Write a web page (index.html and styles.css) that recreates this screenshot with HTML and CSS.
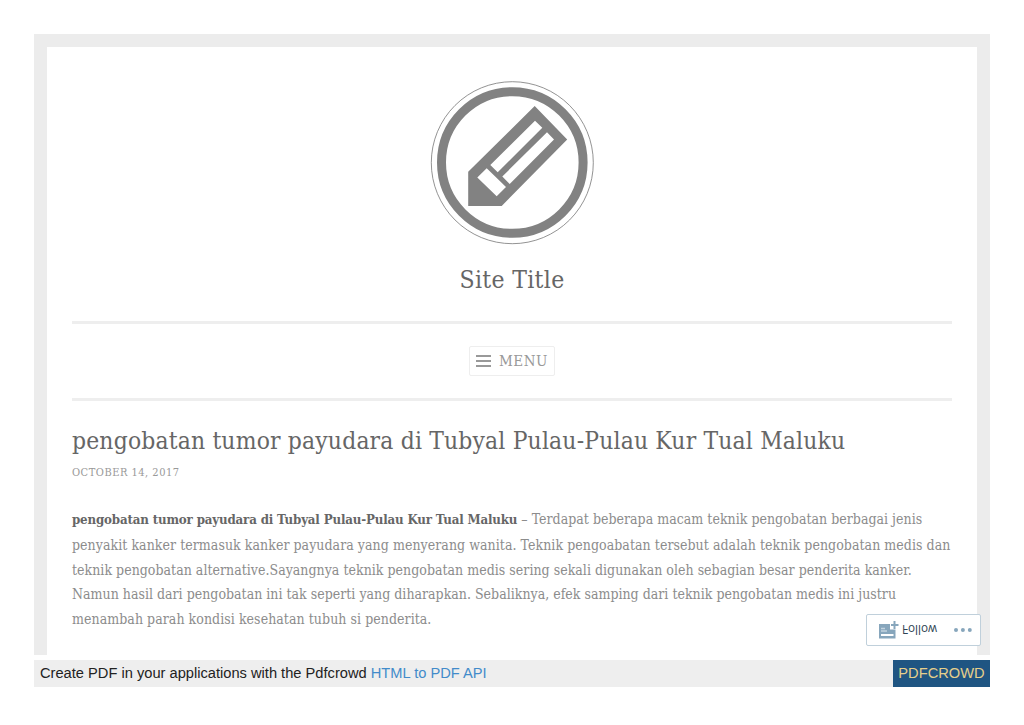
FILE: index.html
```html
<!DOCTYPE html>
<html lang="id">
<head>
<meta charset="utf-8">
<title>Site Title</title>
<link rel="stylesheet" href="styles.css">
</head>
<body>
<div class="page">
  <header class="masthead">
    <svg class="logo" viewBox="0 0 164 164" width="164" height="164" aria-hidden="true">
      <circle cx="82.300" cy="81.700" r="81" fill="none" stroke="#777" stroke-width="0.8"/>
      <circle cx="82.300" cy="81.500" r="70.800" fill="none" stroke="#828282" stroke-width="9"/>
      <path fill="#828282" fill-rule="evenodd" d="M104.700 25L137.200 58.500L71.700 125H38.200V90.800Z M105 39.700L60.300 83.900L67.700 91.300L112.300 46.700Z M117 51.300L72.300 95.500L79.700 103L124 58.500Z M56.700 87.300L47.300 96.500L66.700 115.300L76 106Z"/>
    </svg>
    <h1 class="site-title">Site Title</h1>
  </header>
  <nav class="menu-bar">
    <button class="menu-button">
      <svg width="15" height="12" viewBox="0 0 15 12" aria-hidden="true"><path d="M0 1H15M0 6H15M0 11H15" stroke="#999" stroke-width="2"/></svg>
      <span class="menu-label">MENU</span>
    </button>
  </nav>
  <article class="entry">
    <h2 class="entry-title">pengobatan tumor payudara di Tubyal Pulau-Pulau Kur Tual Maluku</h2>
    <div class="entry-date">OCTOBER 14, 2017</div>
    <p class="entry-text">
      <span class="line line-lead"><strong>pengobatan tumor payudara di Tubyal Pulau-Pulau Kur Tual Maluku</strong> – Terdapat beberapa macam teknik pengobatan berbagai jenis</span>
      <span class="line line-wide">penyakit kanker termasuk kanker payudara yang menyerang wanita. Teknik pengoabatan tersebut adalah teknik pengobatan medis dan</span>
      <span class="line line-lead">teknik pengobatan alternative.Sayangnya teknik pengobatan medis sering sekali digunakan oleh sebagian besar penderita kanker.</span>
      <span class="line line-tight">Namun hasil dari pengobatan ini tak seperti yang diharapkan. Sebaliknya, efek samping dari teknik pengobatan medis ini justru</span>
      <span class="line line-wide">menambah parah kondisi kesehatan tubuh si penderita.</span>
    </p>
  </article>
</div>
<footer class="pdf-bar">
  <span class="pdf-note">Create PDF in your applications with the Pdfcrowd <a class="pdf-link" href="#">HTML to PDF API</a></span>
  <span class="pdf-brand">PDFCROWD</span>
</footer>
<div class="follow">
  <svg class="follow-icon" width="20" height="18" viewBox="0 0 20 18" aria-hidden="true">
    <path fill="#87a6bc" fill-rule="evenodd" d="M0 3H11V8.500H16.500V17.500H0Z M2 13V15H14.500V13Z"/>
    <path d="M2 7.500H6M2 10H8" stroke="#c3d3de" stroke-width="1.500"/>
    <path d="M15.500 0V8M12 4H19.500" stroke="#87a6bc" stroke-width="2"/>
  </svg>
  <span class="follow-text">Follow</span>
  <svg class="follow-dots" width="18" height="4" viewBox="0 0 18 4" aria-hidden="true"><g fill="#87a6bc"><circle cx="2" cy="2" r="2"/><circle cx="8.900" cy="2" r="2"/><circle cx="15.800" cy="2" r="2"/></g></svg>
</div>
</body>
</html>
```
FILE: styles.css
```css
body { margin: 0; background: #fff; }
.page { box-sizing: border-box; width: 956px; height: 621px; margin: 34px 0 0 34px; padding: 0 25px; border: 13px solid #ececec; border-bottom: 0; font-family: "DejaVu Serif Condensed", "DejaVu Serif", serif; color: #666; }
.masthead { display: flex; flex-direction: column; align-items: center; height: 274px; padding-top: 34px; box-sizing: border-box; }
.logo { flex: none; }
.site-title { margin: 15px 0 0; font-size: 24.5px; font-weight: 400; line-height: 40px; letter-spacing: 0.33px; }
.menu-bar { display: flex; justify-content: center; align-items: center; height: 80px; box-sizing: border-box; border: solid #eee; border-width: 3px 0; }
.menu-button { display: flex; align-items: center; gap: 8px; width: 86px; height: 30px; font: 15px "DejaVu Serif Condensed", "DejaVu Serif", serif; letter-spacing: 0.5px; color: #999; background: #fff; border: 1px solid #eee; border-radius: 2px; padding: 0 6px; }
.entry-title { margin: 23px 0 0; font-size: 24.4px; font-weight: 400; line-height: 34px; letter-spacing: 0.17px; white-space: nowrap; }
.entry-date { font-size: 11px; line-height: 16px; margin-top: 7px; color: #999; letter-spacing: 0.5px; }
.entry-text { margin: 26.3px 0 0; font-size: 14px; line-height: 24.7px; color: #8c8c8c; }
.line { display: block; white-space: nowrap; }
.line-lead { letter-spacing: 0.025px; }
.line-wide { letter-spacing: 0.052px; }
.line-tight { letter-spacing: 0.013px; }
.entry-text strong { color: #666; font-size: 13.2px; letter-spacing: -0.17px; }
.pdf-bar { display: flex; justify-content: space-between; align-items: flex-start; width: 956px; height: 27px; margin: 5px 0 0 34px; padding-left: 6px; box-sizing: border-box; background: #eee; font: 14.67px/26px "Liberation Sans", Arial, sans-serif; color: #222; }
.pdf-link { color: #428bca; text-decoration: none; }
.pdf-brand { width: 97px; height: 27px; text-align: center; background: #1f5582; color: #e6cf8b; }
.follow { position: absolute; left: 866px; top: 614px; width: 115px; height: 32px; box-sizing: border-box; display: flex; align-items: center; padding: 0 8px 0 12px; border: 1px solid #c0d0db; border-radius: 2px; background: #fff; }
.follow-icon { margin-bottom: 1px; }
.follow-text { margin-left: 3px; font: 11.7px/16px "Open Sans", sans-serif; color: #2e4453; transform: scaleY(-1); }
.follow-dots { margin: 0 0 1px auto; }
```
